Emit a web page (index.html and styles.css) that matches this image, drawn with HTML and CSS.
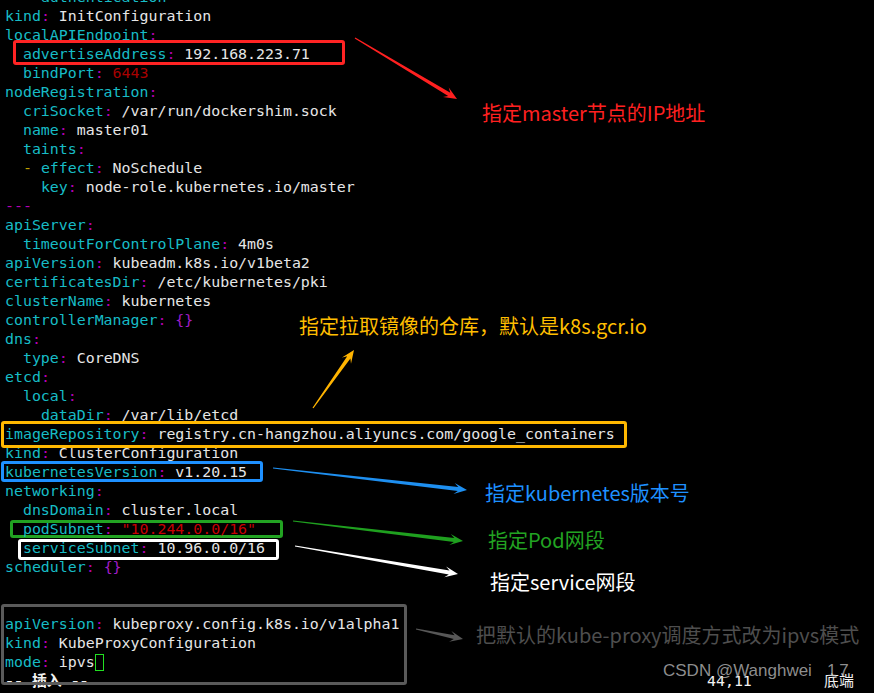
FILE: index.html
```html
<!DOCTYPE html>
<html lang="zh-CN">
<head>
    <meta charset="UTF-8">
    <title>kubeadm-config.yaml</title>
    <link rel="stylesheet" href="styles.css">
</head>
<body>
<div class="screen">
    <div class="term">
        <div class="ln">    <span class="k">authentication</span></div>
        <div class="ln"><span class="k">kind</span><span class="c">:</span> InitConfiguration</div>
        <div class="ln"><span class="k">localAPIEndpoint</span><span class="c">:</span></div>
        <div class="ln">  <span class="box box-red"><span class="k">advertiseAddress</span><span class="c">:</span> 192.168.223.71</span></div>
        <div class="ln">  <span class="k">bindPort</span><span class="c">:</span> <span class="n">6443</span></div>
        <div class="ln"><span class="k">nodeRegistration</span><span class="c">:</span></div>
        <div class="ln">  <span class="k">criSocket</span><span class="c">:</span> /var/run/dockershim.sock</div>
        <div class="ln">  <span class="k">name</span><span class="c">:</span> master01</div>
        <div class="ln">  <span class="k">taints</span><span class="c">:</span></div>
        <div class="ln">  <span class="d">-</span> <span class="k">effect</span><span class="c">:</span> NoSchedule</div>
        <div class="ln">    <span class="k">key</span><span class="c">:</span> node-role.kubernetes.io/master</div>
        <div class="ln"><span class="c">---</span></div>
        <div class="ln"><span class="k">apiServer</span><span class="c">:</span></div>
        <div class="ln">  <span class="k">timeoutForControlPlane</span><span class="c">:</span> 4m0s</div>
        <div class="ln"><span class="k">apiVersion</span><span class="c">:</span> kubeadm.k8s.io/v1beta2</div>
        <div class="ln"><span class="k">certificatesDir</span><span class="c">:</span> /etc/kubernetes/pki</div>
        <div class="ln"><span class="k">clusterName</span><span class="c">:</span> kubernetes</div>
        <div class="ln"><span class="k">controllerManager</span><span class="c">:</span> <span class="b">{}</span></div>
        <div class="ln"><span class="k">dns</span><span class="c">:</span></div>
        <div class="ln">  <span class="k">type</span><span class="c">:</span> CoreDNS</div>
        <div class="ln"><span class="k">etcd</span><span class="c">:</span></div>
        <div class="ln">  <span class="k">local</span><span class="c">:</span></div>
        <div class="ln">    <span class="k">dataDir</span><span class="c">:</span> /var/lib/etcd</div>
        <div class="ln"><span class="box box-orange"><span class="k">imageRepository</span><span class="c">:</span> registry.cn-hangzhou.aliyuncs.com/google_containers</span></div>
        <div class="ln"><span class="k">kind</span><span class="c">:</span> ClusterConfiguration</div>
        <div class="ln"><span class="box box-blue"><span class="k">kubernetesVersion</span><span class="c">:</span> v1.20.15</span></div>
        <div class="ln"><span class="k">networking</span><span class="c">:</span></div>
        <div class="ln">  <span class="k">dnsDomain</span><span class="c">:</span> cluster.local</div>
        <div class="ln">  <span class="box box-green"><span class="k">podSubnet</span><span class="c">:</span> <span class="s">"10.244.0.0/16"</span></span></div>
        <div class="ln">  <span class="box box-white"><span class="k">serviceSubnet</span><span class="c">:</span> 10.96.0.0/16</span></div>
        <div class="ln"><span class="k">scheduler</span><span class="c">:</span> <span class="b">{}</span></div>
        <div class="ln"> </div>
        <div class="ln"> </div>
        <div class="ln"><span class="k">apiVersion</span><span class="c">:</span> kubeproxy.config.k8s.io/v1alpha1</div>
        <div class="ln"><span class="k">kind</span><span class="c">:</span> KubeProxyConfiguration</div>
        <div class="ln"><span class="k">mode</span><span class="c">:</span> ipvs<span class="cursor"></span></div>
        <div class="ln status">
            <span class="mode">-- 插入 --</span>
            <span class="pos">44,11</span>
            <span class="where">底端</span>
        </div>
    </div>

    <div class="frame-grey"></div>

    <div class="note note-red">指定master节点的IP地址</div>
    <div class="note note-orange">指定拉取镜像的仓库，默认是k8s.gcr.io</div>
    <div class="note note-blue">指定kubernetes版本号</div>
    <div class="note note-green">指定Pod网段</div>
    <div class="note note-white">指定service网段</div>
    <div class="note note-grey">把默认的kube-proxy调度方式改为ipvs模式</div>

    <svg class="arrows" id="arrows" width="874" height="693" viewBox="0 0 874 693"></svg>

    <div class="watermark">CSDN @Wanghwei<span class="wm-num">17</span></div>
</div>

<script>
// tapered annotation arrows: thin tail, swept-back head
function arrow(x1, y1, x2, y2, color) {
    let dx = x2 - x1, dy = y2 - y1;
    let len = Math.hypot(dx, dy);
    let ux = dx / len, uy = dy / len;
    let nx = -uy, ny = ux;
    let head = 13, wing = 5.5, neck = 2, tail = 0.6;
    let pts = [
        [x1 + nx * tail, y1 + ny * tail],
        [x2 - ux * (head - 4) + nx * neck, y2 - uy * (head - 4) + ny * neck],
        [x2 - ux * head + nx * wing, y2 - uy * head + ny * wing],
        [x2, y2],
        [x2 - ux * head - nx * wing, y2 - uy * head - ny * wing],
        [x2 - ux * (head - 4) - nx * neck, y2 - uy * (head - 4) - ny * neck],
        [x1 - nx * tail, y1 - ny * tail]
    ];
    let poly = document.createElementNS("http://www.w3.org/2000/svg", "polygon");
    poly.setAttribute("points", pts.map(p => p[0].toFixed(1) + "," + p[1].toFixed(1)).join(" "));
    poly.setAttribute("fill", color);
    document.getElementById("arrows").appendChild(poly);
}
arrow(355, 38, 457, 99, "#ff2020");
arrow(313, 408, 354, 350, "#ffb400");
arrow(273, 468, 467, 490, "#1e8ff0");
arrow(293, 521, 463, 541, "#1fa01f");
arrow(295, 546, 458, 574, "#ffffff");
arrow(416, 629, 463, 639, "#575757");
</script>
</body>
</html>
```

FILE: styles.css
```css
* { margin: 0; padding: 0; box-sizing: border-box; }
body { background: #000; overflow: hidden; }

.screen {
    position: relative;
    width: 874px;
    height: 693px;
    overflow: hidden;
    background: #000;
}

/* terminal text */
.term {
    margin-top: -12px;
    padding-left: 5px;
    font-family: "DejaVu Sans Mono", "Noto Sans CJK SC", monospace;
    font-size: 14.9px;
    color: #e6e6e6;
}
.ln { height: 19px; line-height: 19px; white-space: pre; }
.k { color: #17bcc6; }
.c { color: #b400b4; }
.b { color: #a01cc8; }
.d { color: #bfa200; }
.n { color: #a80000; }
.s { color: #c80000; }

.cursor {
    display: inline-block;
    width: 9px;
    height: 17px;
    border: 1px solid #22e022;
    vertical-align: -4px;
}

.status { display: grid; grid-template-columns: 702px 117px auto; color: #f2f2f2; }
.status .mode { font-weight: bold; }

/* highlight boxes drawn around a line */
.box {
    display: inline-block;
    position: relative;
    z-index: 1;
    background: #000;
    border: 3px solid;
    border-radius: 3px;
}
.box-red { border-color: #ff2424; line-height: 15px; padding: 4px 32px 0 7px; margin: -7px -35px -3px -10px; }
.box-orange { border-color: #ffb800; line-height: 19px; padding: 1px 9px 1px 1px; margin: -4px -12px -4px -4px; }
.box-blue { border-color: #1e90ff; line-height: 14px; padding: 1px 13px 0 1px; margin: -4px -16px -3px -4px; }
.box-green { border-color: #22a322; line-height: 12px; padding: 0 24px 0 10px; margin: -3px -27px -3px -13px; }
.box-white { border-color: #fff; line-height: 13px; padding: 0 11px 2px 2px; margin: -3px -14px -5px -5px; }

.frame-grey {
    position: absolute;
    left: 1px;
    top: 604px;
    width: 406px;
    height: 81px;
    border: 3px solid #5a5a5a;
    border-radius: 3px;
    z-index: 2;
}

/* annotation labels */
.note {
    position: absolute;
    font-family: "Noto Sans CJK SC", "Noto Sans", sans-serif;
    font-size: 20px;
    line-height: 26px;
    white-space: nowrap;
    z-index: 3;
}
.note-red { left: 482px; top: 100px; color: #ff2020; }
.note-orange { left: 299px; top: 313px; color: #ffbe00; }
.note-blue { left: 485px; top: 480px; color: #1e90ff; }
.note-green { left: 488px; top: 527px; color: #22a322; }
.note-white { left: 490px; top: 569px; color: #fff; }
.note-grey { left: 476px; top: 622px; color: #4e4e4e; }

.arrows { position: absolute; left: 0; top: 0; z-index: 3; }

.watermark {
    position: absolute;
    left: 663px;
    top: 660px;
    font-family: "Liberation Sans", Arial, sans-serif;
    font-size: 17px;
    line-height: 22px;
    white-space: pre;
    color: rgba(190, 190, 190, 0.75);
    z-index: 4;
}
.wm-num { margin-left: 15px; letter-spacing: 3px; }
```
